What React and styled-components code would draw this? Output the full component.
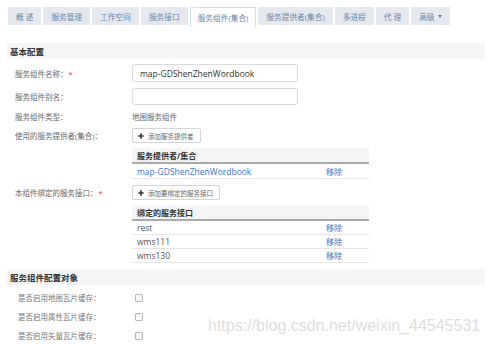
import React from "react";
import styled, { createGlobalStyle } from "styled-components";

const GlobalStyle = createGlobalStyle`
  body {
    margin: 0;
    background: #fff;
    font-family: "Open Sans", "Noto Sans CJK SC", sans-serif;
    font-size: 8px;
    color: #555;
  }
`;

const Page = styled.div`
  position: relative;
  width: 487px;
  height: 344px;
  overflow: hidden;
  padding-left: 7px;
  box-sizing: border-box;
`;

const Tabs = styled.div`
  display: flex;
  align-items: flex-start;
  gap: 2px;
  padding: 7px 0 0 1px;
`;

const Tab = styled.div`
  height: ${(p) => (p.$active ? "20px" : "18px")};
  padding: 0 7px;
  display: flex;
  align-items: center;
  gap: 3px;
  box-sizing: border-box;
  background: ${(p) => (p.$active ? "#fff" : "#e5e9ef")};
  border: 1px solid ${(p) => (p.$active ? "#cfe0f1" : "#e5e9ef")};
  border-bottom: none;
  color: #6a87aa;
  font-size: 7.7px;
  white-space: nowrap;
`;

const Caret = styled.span`
  width: 0;
  height: 0;
  border-left: 2.5px solid transparent;
  border-right: 2.5px solid transparent;
  border-top: 3px solid #5a7fa8;
`;

const SectionHead = styled.div`
  margin-top: ${(p) => p.$top}px;
  width: 478px;
  height: 16px;
  background: #f5f5f5;
  display: flex;
  align-items: center;
  padding-left: 3px;
  box-sizing: border-box;
  font-weight: bold;
  font-size: 8.5px;
  color: #333;
`;

const Row = styled.div`
  display: flex;
  align-items: center;
  margin-top: ${(p) => p.$top}px;
  min-height: ${(p) => p.$h || 0}px;
`;

const Label = styled.div`
  width: 125px;
  padding-left: 8px;
  box-sizing: border-box;
  color: #666;
  font-size: 7.5px;
  flex-shrink: 0;
`;

const Star = styled.span`
  color: #e23b3b;
  margin-left: 1px;
`;

const Input = styled.div`
  width: 166px;
  height: ${(p) => p.$h}px;
  border: 1px solid #dcdcdc;
  border-radius: 3px;
  box-sizing: border-box;
  padding-left: 7px;
  display: flex;
  align-items: center;
  color: #333;
  font-size: 8.5px;
`;

const Plain = styled.div`
  color: #666;
  font-size: 7.5px;
`;

const Button = styled.div`
  height: 15px;
  padding: 0 6px 0 5px;
  border: 1px solid #d4d4d4;
  border-radius: 2px;
  box-sizing: border-box;
  display: inline-flex;
  align-items: center;
  gap: 4px;
  color: #666;
  font-size: 6.5px;
  background: #fff;
`;

const PlusIcon = () => (
  <svg width="6" height="6" viewBox="0 0 6 6">
    <path d="M3 0.3V5.7M0.3 3H5.7" stroke="#333" strokeWidth="1.6" />
  </svg>
);

const Table = styled.div`
  margin: ${(p) => p.$top}px 0 0 125px;
  width: 237px;
`;

const THead = styled.div`
  height: 14px;
  background: #f5f5f5;
  border-bottom: 2px solid #aaa;
  display: flex;
  align-items: center;
  padding-left: 5px;
  font-weight: bold;
  font-size: 8px;
  color: #333;
`;

const TRow = styled.div`
  display: grid;
  grid-template-columns: 189px 1fr;
  align-items: center;
  height: ${(p) => p.$h}px;
  border-bottom: 1px solid #e6e6e6;
  padding-left: 5px;
  box-sizing: border-box;
  font-size: 8.5px;
  color: ${(p) => (p.$link ? "#3b73c8" : "#555")};
`;

const Link = styled.span`
  color: #3b73c8;
  font-size: 8px;
`;

const Check = styled.span`
  display: inline-block;
  width: 6px;
  height: 6px;
  border: 1px solid #b8b8b8;
  border-radius: 1px;
  background: #fafafa;
`;

const CheckList = styled.div`
  margin-top: 3px;
`;

const CheckRow = styled.div`
  display: flex;
  align-items: center;
  height: 19px;
`;

const CheckLabel = styled.div`
  width: 128px;
  padding-left: 11px;
  box-sizing: border-box;
  color: #777;
  font-size: 7.5px;
`;

const Watermark = styled.div`
  position: absolute;
  left: 208px;
  top: 317px;
  font-family: "Liberation Sans", sans-serif;
  font-size: 16px;
  color: #dedede;
  white-space: nowrap;
  pointer-events: none;
`;

const tabs = ["概 述", "服务管理", "工作空间", "服务接口", "服务组件(集合)", "服务提供者(集合)", "多进程", "代 理"];

const bound = ["rest", "wms111", "wms130"];

const cacheOptions = ["是否启用地图瓦片缓存：", "是否启用属性瓦片缓存：", "是否启用矢量瓦片缓存："];

export default function App() {
  return (
    <Page>
      <GlobalStyle />
      <Tabs>
        {tabs.map((t) => (
          <Tab key={t} $active={t === "服务组件(集合)"}>
            {t}
          </Tab>
        ))}
        <Tab>
          高级 <Caret />
        </Tab>
      </Tabs>

      <SectionHead $top={16}>基本配置</SectionHead>

      <Row $top={5}>
        <Label>
          服务组件名称：<Star>*</Star>
        </Label>
        <Input $h={18}>map-GDShenZhenWordbook</Input>
      </Row>
      <Row $top={6}>
        <Label>服务组件别名：</Label>
        <Input $h={17} />
      </Row>
      <Row $top={5} $h={12}>
        <Label>服务组件类型：</Label>
        <Plain>地图服务组件</Plain>
      </Row>
      <Row $top={6}>
        <Label>使用的服务提供者(集合)：</Label>
        <Button>
          <PlusIcon />
          添加服务提供者
        </Button>
      </Row>

      <Table $top={5}>
        <THead>服务提供者/集合</THead>
        <TRow $h={15} $link>
          <span>map-GDShenZhenWordbook</span>
          <Link>移除</Link>
        </TRow>
      </Table>

      <Row $top={6}>
        <Label>
          本组件绑定的服务接口：<Star>*</Star>
        </Label>
        <Button>
          <PlusIcon />
          添加要绑定的服务接口
        </Button>
      </Row>

      <Table $top={5}>
        <THead>绑定的服务接口</THead>
        {bound.map((b) => (
          <TRow key={b} $h={14}>
            <span>{b}</span>
            <Link>移除</Link>
          </TRow>
        ))}
      </Table>

      <SectionHead $top={6}>服务组件配置对象</SectionHead>

      <CheckList>
        {cacheOptions.map((c) => (
          <CheckRow key={c}>
            <CheckLabel>{c}</CheckLabel>
            <Check />
          </CheckRow>
        ))}
      </CheckList>

      <Watermark>https://blog.csdn.net/weixin_44545531</Watermark>
    </Page>
  );
}
